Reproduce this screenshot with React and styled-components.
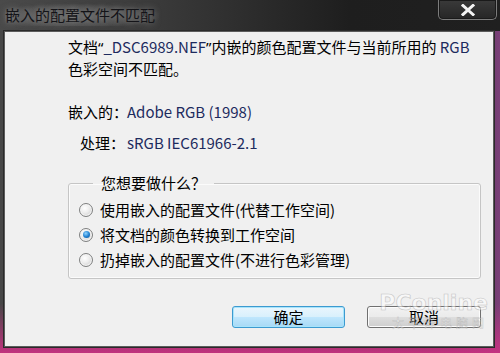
import React from "react";
import styled, { createGlobalStyle } from "styled-components";

const GlobalStyle = createGlobalStyle`
  html, body {
    margin: 0;
    padding: 0;
    background: #1a1a1a;
  }
  body {
    font-family: "Noto Sans CJK SC", "Noto Sans", sans-serif;
  }
`;

const Frame = styled.div`
  position: relative;
  width: 500px;
  height: 353px;
  overflow: hidden;
  display: flex;
  flex-direction: column;
  background:
    linear-gradient(180deg, rgba(0, 0, 0, 0) 0%, rgba(0, 0, 0, 0) 86%, rgba(200, 50, 130, 0.95) 100%),
    linear-gradient(90deg, #474747 0%, #3a3a3a 50%, #2a2a2a 85%, #7a3f78 100%);
`;

const TitleBar = styled.div`
  height: 31px;
  display: flex;
  align-items: flex-start;
  justify-content: space-between;
  background: linear-gradient(90deg, #4a4a4a 0%, #3b3b3b 30%, #1e1e1e 70%, #202020 100%);
`;

const Title = styled.div`
  margin: 4px 0 0 5px;
  font-size: 15px;
  line-height: 22px;
  color: #141418;
  white-space: nowrap;
  padding: 0 4px 0 0;
  background: radial-gradient(ellipse at 45% 55%, rgba(120, 120, 120, 0.55) 0%, rgba(120, 120, 120, 0.25) 55%, rgba(120, 120, 120, 0) 75%);
  text-shadow: 0 0 6px rgba(170, 170, 170, 0.7);
`;

const CloseButton = styled.div`
  width: 59px;
  height: 20px;
  margin-right: 3px;
  box-sizing: border-box;
  border: 1px solid #7c7c7c;
  border-top: none;
  border-radius: 0 0 5px 5px;
  background: linear-gradient(180deg, #3a3a3a 0%, #262626 100%);
  box-shadow: inset 0 0 0 1px #1a1a1a;
  display: flex;
  align-items: center;
  justify-content: center;
`;

const Client = styled.div`
  flex: 1;
  margin: 0 6px 6px 4px;
  border: 1px solid #5c5c5c;
  box-shadow: 0 0 0 1px #2a2a2a;
  background: #f0f0f0;
  display: flex;
  flex-direction: column;
  padding: 4px 12px 0 63px;
  font-size: 15px;
  color: #000;
`;

const Message = styled.div`
  line-height: 22px;
  white-space: nowrap;
`;

const Latin = styled.span`
  color: #1d2b5e;
`;

const Quote = styled.span`
  font-family: "Noto Sans", sans-serif;
`;

const InfoGrid = styled.div`
  margin-top: 21px;
  display: grid;
  grid-template-columns: 57px auto;
  column-gap: 2px;
  row-gap: 9px;
  line-height: 22px;
  justify-content: start;
`;

const InfoLabel = styled.div`
  text-align: right;
  white-space: nowrap;
`;

const InfoValue = styled.div`
  color: #1d2b5e;
  white-space: nowrap;
`;

const Group = styled.fieldset`
  margin: 18px 0 0 0;
  padding: 3px 0 6px 10px;
  border: 1px solid #c5c5c5;
  border-radius: 3px;
  box-shadow: inset 0 0 0 1px #fbfbfb;
  min-width: 0;
`;

const Caption = styled.legend`
  margin-left: 14px;
  padding: 0 8px;
  line-height: 22px;
`;

const Option = styled.label`
  display: flex;
  align-items: center;
  height: 25px;
  gap: 7px;
  white-space: nowrap;
`;

const Radio = styled.span`
  width: 14px;
  height: 14px;
  box-sizing: border-box;
  border-radius: 50%;
  border: 1px solid #7f8080;
  background: radial-gradient(circle at 40% 35%, #ffffff 0%, #eeeeee 40%, #c4c4c4 100%);
  box-shadow: inset 0 0 0 1px #f6f6f6;
  display: flex;
  align-items: center;
  justify-content: center;
  flex: none;

  &::after {
    content: "";
    width: 7px;
    height: 7px;
    border-radius: 50%;
    display: ${(p) => (p.$checked ? "block" : "none")};
    background: radial-gradient(circle at 40% 35%, #8fd4ff 0%, #1f7fd0 55%, #0f4f8f 100%);
  }
`;

const Buttons = styled.div`
  margin-top: 27px;
  display: flex;
  justify-content: flex-end;
  gap: 22px;
`;

const Button = styled.div`
  width: ${(p) => (p.$default ? "113px" : "114px")};
  height: 22px;
  box-sizing: border-box;
  border-radius: 3px;
  border: 1px solid ${(p) => (p.$default ? "#3c9ad0" : "#707070")};
  background: ${(p) =>
    p.$default
      ? "linear-gradient(180deg, #eaf6fd 0%, #d9f0fc 48%, #bee6fd 52%, #a7d9f5 100%)"
      : "linear-gradient(180deg, #f2f2f2 0%, #ebebeb 48%, #dddddd 52%, #cfcfcf 100%)"};
  box-shadow: inset 0 0 0 1px ${(p) => (p.$default ? "#a8e4fb" : "#fcfcfc")};
  display: flex;
  align-items: center;
  justify-content: center;
  font-size: 15px;
  line-height: 20px;
  color: #000;
`;

const Watermark = styled.div`
  position: absolute;
  right: 12px;
  bottom: 22px;
  display: flex;
  flex-direction: column;
  align-items: flex-end;
  pointer-events: none;
  opacity: 0.5;
  font-family: "DejaVu Sans", sans-serif;
`;

const WatermarkBrand = styled.span`
  font-size: 22px;
  font-weight: bold;
  color: #ffffff;
  line-height: 22px;
  -webkit-text-stroke: 0.6px #9a9a9a;
`;

const WatermarkSub = styled.span`
  font-family: "Noto Sans CJK SC", sans-serif;
  font-size: 12px;
  letter-spacing: 4px;
  color: #ffffff;
  -webkit-text-stroke: 0.4px #9a9a9a;
`;

export default function App() {
  return (
    <>
      <GlobalStyle />
      <Frame>
        <TitleBar>
          <Title>嵌入的配置文件不匹配</Title>
          <CloseButton>
            <svg width="14" height="12" viewBox="0 0 14 12">
              <path d="M2 1.5 L12 10.5 M12 1.5 L2 10.5" stroke="#f4f4f4" strokeWidth="3" strokeLinecap="square" />
            </svg>
          </CloseButton>
        </TitleBar>
        <Client>
          <Message>
            文档<Quote>“</Quote><Latin>_DSC6989.NEF</Latin><Quote>”</Quote>内嵌的颜色配置文件与当前所用的 <Latin>RGB</Latin>
            <br />
            色彩空间不匹配。
          </Message>
          <InfoGrid>
            <InfoLabel>嵌入的：</InfoLabel>
            <InfoValue>Adobe RGB (1998)</InfoValue>
            <InfoLabel>处理：</InfoLabel>
            <InfoValue>sRGB IEC61966-2.1</InfoValue>
          </InfoGrid>
          <Group>
            <Caption>您想要做什么？</Caption>
            <Option>
              <Radio />
              使用嵌入的配置文件(代替工作空间)
            </Option>
            <Option>
              <Radio $checked />
              将文档的颜色转换到工作空间
            </Option>
            <Option>
              <Radio />
              扔掉嵌入的配置文件(不进行色彩管理)
            </Option>
          </Group>
          <Buttons>
            <Button $default>确定</Button>
            <Button>取消</Button>
          </Buttons>
        </Client>
        <Watermark>
          <WatermarkBrand>PConline</WatermarkBrand>
          <WatermarkSub>太平洋电脑网</WatermarkSub>
        </Watermark>
      </Frame>
    </>
  );
}
